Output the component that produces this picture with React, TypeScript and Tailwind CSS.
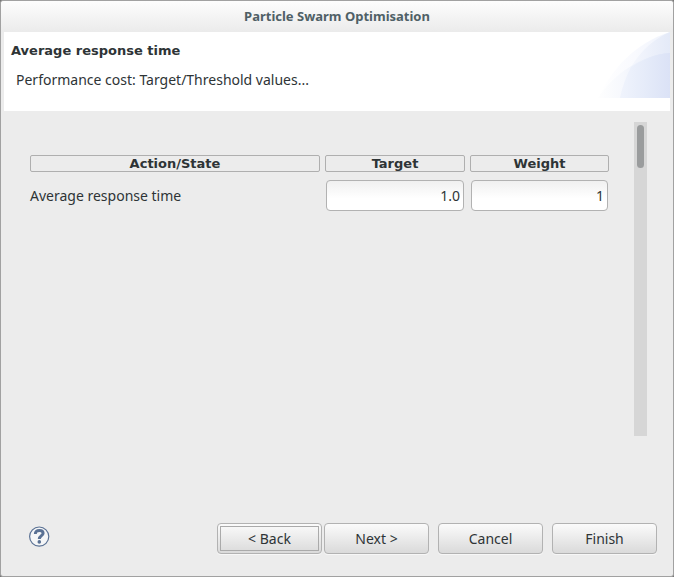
import type { ReactNode } from "react";

const headCell =
  'h-[17px] rounded-[2px] border border-[#afafaf] p-0 text-center text-[13px] leading-[15px] font-bold font-["DejaVu_Sans",sans-serif]';

function NumberField({ label, value }: { label: string; value: string }) {
  return (
    <input
      type="text"
      aria-label={label}
      defaultValue={value}
      className="block h-[31px] w-full rounded-[4px] border border-[#b2b2b2] bg-linear-to-b from-[#f0f0f0] to-white to-60% px-[3px] text-right text-sm text-[#2e3436] outline-none"
    />
  );
}

function DialogButton({ children, focused = false }: { children: ReactNode; focused?: boolean }) {
  return (
    <button
      type="button"
      className="flex h-[31px] w-[105px] rounded-[4px] border border-[#b2b2b2] bg-linear-to-b from-[#fbfbfb] to-[#dadada] p-[2px] text-sm leading-5 shadow-[0_1px_0_#f7f7f7]"
    >
      <span
        className={
          focused
            ? "flex h-full w-full items-center justify-center border border-[#aaaaaa]"
            : "flex h-full w-full items-center justify-center"
        }
      >
        {children}
      </span>
    </button>
  );
}

function BannerArt() {
  return (
    <svg className="h-[66px] w-[75px] shrink-0" viewBox="0 0 75 66" aria-hidden="true">
      <defs>
        <linearGradient id="outer" gradientUnits="userSpaceOnUse" x1="3" x2="75" y1="0" y2="0">
          <stop offset="0" stopColor="#ffffff" />
          <stop offset="0.5" stopColor="#f9fafe" />
          <stop offset="1" stopColor="#eff3fc" />
        </linearGradient>
        <linearGradient id="inner" gradientUnits="userSpaceOnUse" x1="27" x2="75" y1="0" y2="0">
          <stop offset="0" stopColor="#f9fafe" />
          <stop offset="1" stopColor="#e4eaf8" />
        </linearGradient>
        <linearGradient id="low" gradientUnits="userSpaceOnUse" x1="3" x2="75" y1="0" y2="0">
          <stop offset="0" stopColor="#fefefe" />
          <stop offset="0.35" stopColor="#f6f8fd" />
          <stop offset="0.7" stopColor="#e7edfa" />
          <stop offset="1" stopColor="#dce3f6" />
        </linearGradient>
        <linearGradient id="overlap" gradientUnits="userSpaceOnUse" x1="27" x2="75" y1="0" y2="0">
          <stop offset="0" stopColor="#eff3fc" />
          <stop offset="0.5" stopColor="#e5ebf9" />
          <stop offset="1" stopColor="#dbe2f6" />
        </linearGradient>
      </defs>
      <path d="M3 66C16 38 40 11 75 0V66Z" fill="url(#outer)" />
      <path d="M25 66C29 41 45 13 75 0V66Z" fill="url(#inner)" />
      <path d="M3 66C18 43 45 23 75 21V66Z" fill="url(#low)" />
      <path d="M25 66C27 55 31 45 36 35C50 26 61 22 75 21V66Z" fill="url(#overlap)" />
    </svg>
  );
}

export default function App() {
  return (
    <div className="min-h-screen bg-[#777777]">
      <div className='flex min-h-screen flex-col rounded-[3px] border border-[#a1a1a1] bg-[#ececec] font-["Noto_Sans",sans-serif] text-sm text-[#2e3436]'>
        <header className="flex h-[31px] items-center justify-center rounded-t-[3px] bg-linear-to-b from-[#fdfdfd] to-[#ebebeb] pb-[2px]">
          <h1 className="text-[13px] leading-5 font-bold text-[#4f6066]">Particle Swarm Optimisation</h1>
        </header>

        <section className="mx-[3px] flex h-[79px] justify-between bg-white">
          <div className="pt-[9px] pl-[7px]">
            <h2 className='font-["DejaVu_Sans",sans-serif] text-[13px] leading-5 font-bold'>
              Average response time
            </h2>
            <p className="mt-[9px] ml-[5px] leading-5">Performance cost: Target/Threshold values...</p>
          </div>
          <BannerArt />
        </section>

        <main className="mt-[11px] mr-[26px] mb-[87px] ml-[24px] flex min-h-[200px] flex-1 gap-[20px]">
          <div className="flex-1 pt-[25px]">
            <table className="w-full table-fixed border-separate border-spacing-x-[5px] border-spacing-y-[8px]">
              <colgroup>
                <col />
                <col className="w-[140px]" />
                <col className="w-[139px]" />
              </colgroup>
              <thead>
                <tr>
                  <th scope="col" className={headCell}>Action/State</th>
                  <th scope="col" className={headCell}>Target</th>
                  <th scope="col" className={headCell}>Weight</th>
                </tr>
              </thead>
              <tbody>
                <tr>
                  <td className="p-0 leading-5">Average response time</td>
                  <td className="px-px py-0">
                    <NumberField label="Average response time target" value="1.0" />
                  </td>
                  <td className="px-px py-0">
                    <NumberField label="Average response time weight" value="1" />
                  </td>
                </tr>
              </tbody>
            </table>
          </div>
          <div className="w-[13px] bg-[#d6d6d6] p-[3px]">
            <div className="h-[43px] w-[7px] rounded-full bg-[#9a9c9d]" />
          </div>
        </main>

        <footer className="flex items-center justify-between pr-[16px] pb-[22px] pl-[28px]">
          <button type="button" aria-label="Help" className="-mt-[4px] flex">
            <svg className="size-[21px]" viewBox="0 0 21 21" aria-hidden="true">
              <circle cx="10.2" cy="10.6" r="9.6" fill="#f5f6f7" stroke="#5a7194" strokeWidth="1.2" />
              <path
                d="M6.4 8C6.2 5.6 7.9 4.5 10.3 4.5C12.8 4.5 14.1 5.8 14.1 7.3C14.1 9.6 10.4 9.8 10.3 13"
                fill="none"
                stroke="#5a7194"
                strokeWidth="3"
              />
              <circle cx="10.3" cy="15.9" r="1.8" fill="#5a7194" />
            </svg>
          </button>
          <div className="flex gap-[9px]">
            <div className="flex gap-[2px]">
              <DialogButton focused>&lt; Back</DialogButton>
              <DialogButton>Next &gt;</DialogButton>
            </div>
            <DialogButton>Cancel</DialogButton>
            <DialogButton>Finish</DialogButton>
          </div>
        </footer>
      </div>
    </div>
  );
}
